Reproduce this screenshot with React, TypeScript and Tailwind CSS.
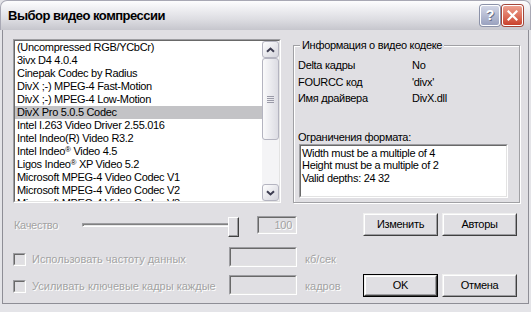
import React from 'react';

const codecs = [
  '(Uncompressed RGB/YCbCr)',
  '3ivx D4 4.0.4',
  'Cinepak Codec by Radius',
  'DivX ;-) MPEG-4 Fast-Motion',
  'DivX ;-) MPEG-4 Low-Motion',
  'DivX Pro 5.0.5 Codec',
  'Intel I.263 Video Driver 2.55.016',
  'Intel Indeo(R) Video R3.2',
  'Intel Indeo® Video 4.5',
  'Ligos Indeo® XP Video 5.2',
  'Microsoft MPEG-4 Video Codec V1',
  'Microsoft MPEG-4 Video Codec V2',
  'Microsoft MPEG-4 Video Codec V3',
];

const selected = 'DivX Pro 5.0.5 Codec';

const sunkenOuter = 'border border-t-[#9d9da1] border-l-[#9d9da1] border-r-white border-b-white';
const sunkenInner = 'border border-t-[#696969] border-l-[#696969] border-r-[#e3e3e3] border-b-[#e3e3e3]';
const disabledText = 'text-[#a3a3a3] [text-shadow:1px_1px_0_#ffffff]';

// renders "®" small and raised like the old bitmap font
const withReg = (s: string) =>
  s.split('®').map((part, i, arr) => (
    <React.Fragment key={i}>
      {part}
      {i < arr.length - 1 && <span className="relative -top-[3px] text-[8px]">®</span>}
    </React.Fragment>
  ));

const Sunken: React.FC<{ className?: string; inner?: string; children?: React.ReactNode }> = ({
  className = '',
  inner = '',
  children,
}) => (
  <div className={`${sunkenOuter} ${className}`}>
    <div className={`${sunkenInner} w-full h-full ${inner}`}>{children}</div>
  </div>
);

const Button: React.FC<{ label: string; isDefault?: boolean }> = ({ label, isDefault }) => (
  <div className={`w-[75px] h-[23px] ${isDefault ? 'border border-black' : ''}`}>
    <div className="w-full h-full border border-t-[#f0f0f0] border-l-[#f0f0f0] border-r-[#404040] border-b-[#404040]">
      <div className="w-full h-full border border-t-white border-l-white border-r-[#9d9da1] border-b-[#9d9da1] flex items-center justify-center text-black">
        {label}
      </div>
    </div>
  </div>
);

const Chevron: React.FC<{ down?: boolean }> = ({ down }) => (
  <svg width="9" height="6" viewBox="0 0 9 6">
    <path
      d={down ? 'M1 1.2 L4.5 4.5 L8 1.2' : 'M1 4.8 L4.5 1.5 L8 4.8'}
      fill="none"
      stroke="#3c3c50"
      strokeWidth="2"
    />
  </svg>
);

const Scrollbar = () => (
  <div className="w-[17px] h-full flex flex-col bg-[#f4f4f6]">
    <div className="h-[17px] rounded-[3px] border border-[#b4b4c0] bg-gradient-to-br from-white to-[#d4d4dc] flex items-center justify-center">
      <Chevron />
    </div>
    <div className="h-[82px] rounded-[3px] border border-[#b4b4c0] bg-gradient-to-r from-[#fafafb] to-[#dcdce3] flex items-center justify-center">
      <svg width="7" height="7" viewBox="0 0 7 7">
        <path d="M0 0.5H7M0 2.5H7M0 4.5H7M0 6.5H7" stroke="#9a9aa8" strokeWidth="1" />
      </svg>
    </div>
    <div className="flex-1" />
    <div className="h-[17px] rounded-[3px] border border-[#b4b4c0] bg-gradient-to-br from-white to-[#d4d4dc] flex items-center justify-center">
      <Chevron down />
    </div>
  </div>
);

const Checkbox = () => (
  <Sunken className="w-[13px] h-[13px] shrink-0" inner="bg-[#e0dfe3]" />
);

export default function App() {
  return (
    <div className="w-[531px] h-[312px] flex flex-col bg-[#e4e4e8] font-['Liberation_Sans',Arial,sans-serif] text-[11px] tracking-[-0.3px] text-black select-none overflow-hidden">
      {/* title bar */}
      <div className="h-[30px] shrink-0 flex items-center rounded-t-[7px] border-t border-x border-[#a8a8b4] bg-[linear-gradient(to_bottom,#fdfdfe_0%,#f0f0f3_25%,#dcdce1_65%,#c6c6cd_100%)]">
        <span className="ml-[7px] text-[13px] font-bold tracking-[-0.5px] text-black">Выбор видео компрессии</span>
        <div className="ml-auto mr-[7px] flex gap-[2px]">
          <div className="w-[20px] h-[21px] rounded-[3px] border border-white bg-gradient-to-b from-[#d2d6e6] to-[#9aa2bf] flex items-center justify-center shadow-[0_0_0_1px_#8c92a8]">
            <span className="text-[14px] font-bold text-white [text-shadow:1px_1px_0_#6b7088]">?</span>
          </div>
          <div className="w-[21px] h-[21px] rounded-[3px] border border-white bg-gradient-to-b from-[#eea08f] to-[#c9402c] flex items-center justify-center shadow-[0_0_0_1px_#a4463a]">
            <svg width="11" height="11" viewBox="0 0 11 11">
              <path d="M1.5 1.5L9.5 9.5M9.5 1.5L1.5 9.5" stroke="white" strokeWidth="2.2" strokeLinecap="square" />
            </svg>
          </div>
        </div>
      </div>

      {/* body */}
      <div className="flex-1 px-[2px] pb-[8px]">
        <div className="h-full border-x border-b border-[#8e8e96] bg-[#e0dfe3] pl-[10px] pt-[9px]">
          {/* top row */}
          <div className="flex">
            <Sunken className="w-[268px] h-[164px]" inner="bg-white flex">
              <div className="flex-1 overflow-hidden">
                {codecs.map((c) => (
                  <div
                    key={c}
                    className={`h-[13px] leading-[13px] pl-[2px] whitespace-nowrap ${c === selected ? 'bg-[#c3c3c6]' : ''}`}
                  >
                    {withReg(c)}
                  </div>
                ))}
              </div>
              <Scrollbar />
            </Sunken>

            <fieldset className="ml-[12px] w-[227px] h-[164px] border border-[#a0a0a4] shadow-[inset_1px_1px_0_#ffffff,1px_1px_0_#ffffff] pl-[4px]">
              <legend className="ml-[2px] px-[2px] leading-[13px] bg-[#e0dfe3]">Информация о видео кодеке</legend>
              <div className="mt-[5px]">
                {[
                  ['Delta кадры', 'No'],
                  ['FOURCC код', "'divx'"],
                  ['Имя драйвера', 'DivX.dll'],
                ].map(([k, v]) => (
                  <div key={k} className="h-[16.5px] flex items-center">
                    <span className="w-[114px]">{k}</span>
                    <span>{v}</span>
                  </div>
                ))}
              </div>
              <div className="mt-[24px] leading-[13px]">Ограничения формата:</div>
              <Sunken className="ml-[1px] w-[209px] h-[54px]" inner="bg-white pl-[1px] pt-[1px] leading-[12.5px]">
                <div>Width must be a multiple of 4</div>
                <div>Height must be a multiple of 2</div>
                <div>Valid depths: 24 32</div>
              </Sunken>
            </fieldset>
          </div>

          {/* bottom area */}
          <div className="flex mt-[10px]">
            <div className="w-[350px]">
              <div className="h-[24px] flex items-center">
                <span className={`w-[68px] pl-[1px] ${disabledText}`}>Качество</span>
                <div className="relative w-[160px] h-[24px] flex items-center">
                  <div className="flex-1 ml-[1px] mr-[4px] h-[4px] border border-t-[#9d9da1] border-l-[#9d9da1] border-b-white border-r-white bg-[#e8e8ea] shadow-[inset_1px_1px_0_#808080]" />
                  <div className="absolute left-[147px] top-[4px] w-[11px] h-[20px] border border-t-white border-l-white border-r-[#404040] border-b-[#404040] bg-[#e0dfe3] shadow-[inset_-1px_-1px_0_#9d9da1]" />
                </div>
                <Sunken className="ml-[16px] w-[40px] h-[18px]" inner="bg-[#e0dfe3] flex items-center justify-end pr-[3px]">
                  <span className={disabledText}>100</span>
                </Sunken>
              </div>

              <div className="mt-[10px] h-[20px] flex items-center">
                <div className="mt-[4px] flex items-center w-[216px] shrink-0">
                  <Checkbox />
                  <span className={`ml-[6px] tracking-normal whitespace-nowrap ${disabledText}`}>Использовать частоту данных</span>
                </div>
                <Sunken className="w-[68px] h-[20px] shrink-0" inner="bg-[#e0dfe3]" />
                <span className={`ml-[8px] mt-[5px] tracking-normal ${disabledText}`}>кб/сек</span>
              </div>

              <div className="mt-[8px] h-[20px] flex items-center">
                <div className="mt-[2px] flex items-center w-[216px] shrink-0">
                  <Checkbox />
                  <span className={`ml-[6px] tracking-normal whitespace-nowrap ${disabledText}`}>Усиливать ключевые кадры каждые</span>
                </div>
                <Sunken className="w-[68px] h-[20px] shrink-0" inner="bg-[#e0dfe3]" />
                <span className={`ml-[8px] mt-[2px] tracking-normal ${disabledText}`}>кадров</span>
              </div>
            </div>

            <div className="flex flex-col">
              <div className="flex gap-[4px]">
                <Button label="Изменить" />
                <Button label="Авторы" />
              </div>
              <div className="mt-[38px] flex gap-[4px]">
                <Button label="OK" isDefault />
                <Button label="Отмена" />
              </div>
            </div>
          </div>
        </div>
      </div>
    </div>
  );
}
